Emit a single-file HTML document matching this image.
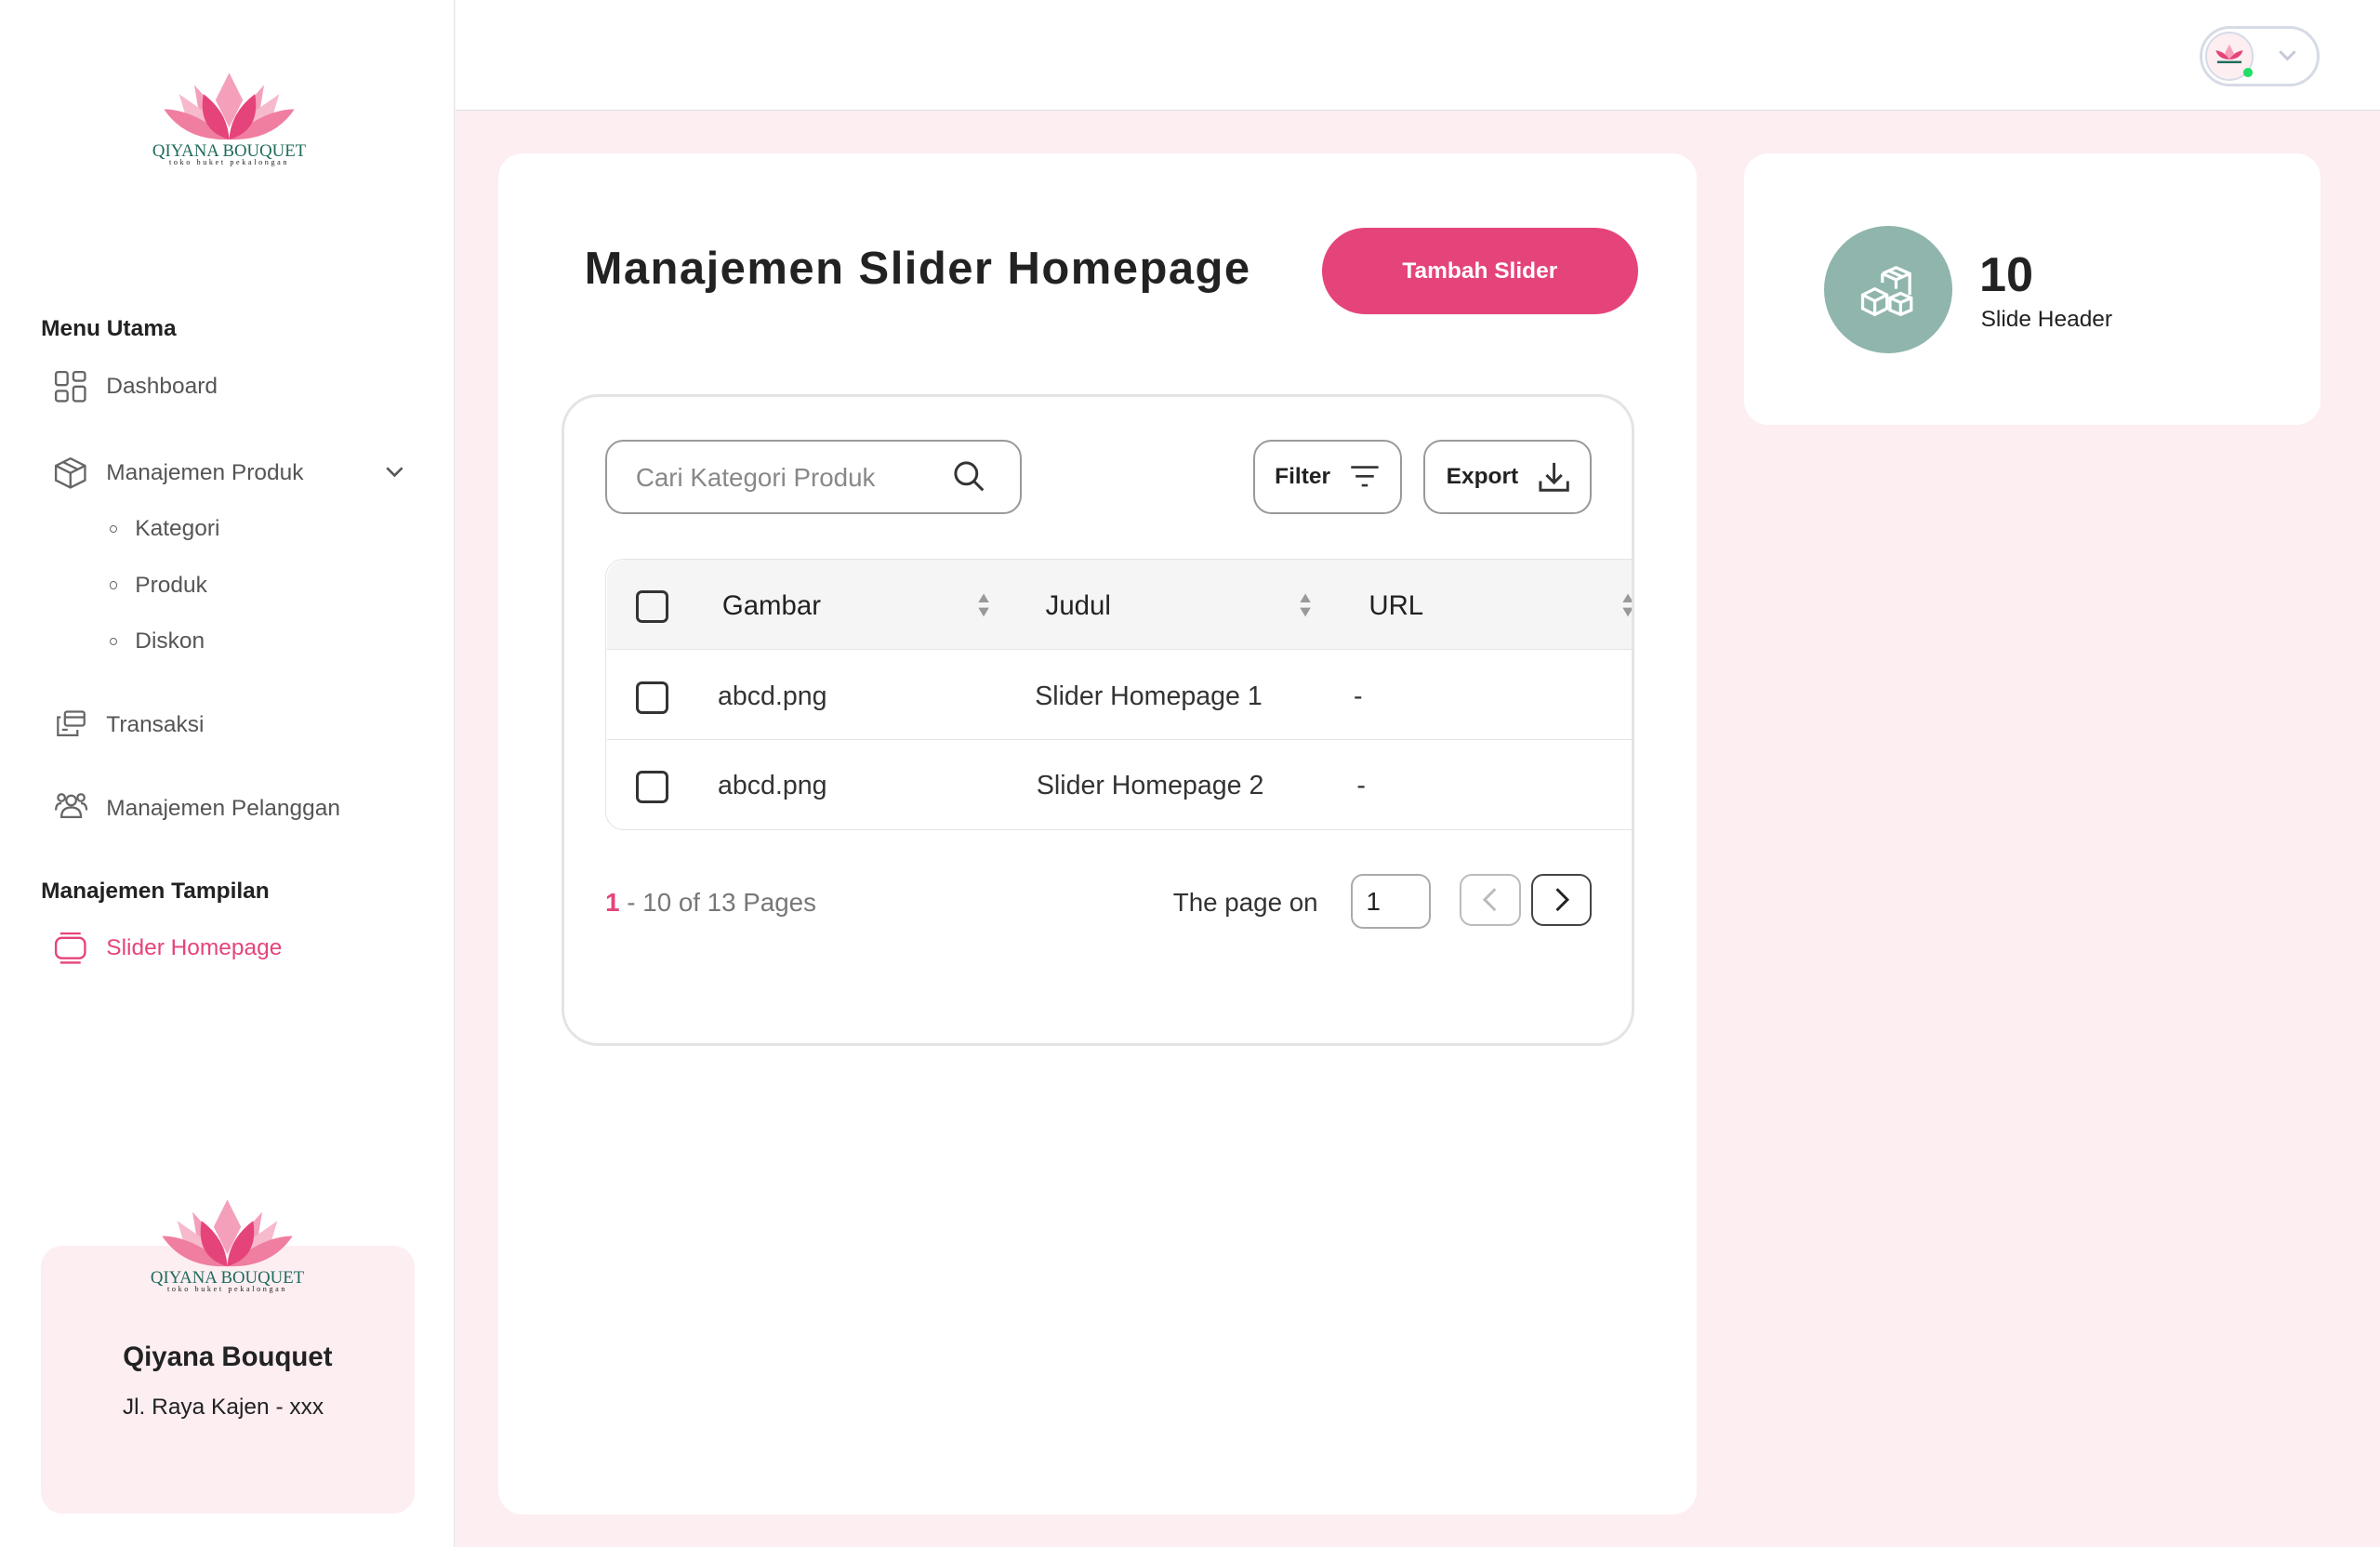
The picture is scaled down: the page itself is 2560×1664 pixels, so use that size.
<!DOCTYPE html>
<html><head><meta charset="utf-8"><style>
html,body{margin:0;padding:0}
body{width:1568px;height:1019px;zoom:1.63265;font-family:"Liberation Sans",sans-serif;color:#222;position:relative;overflow:hidden;background:#fdeef2}
.abs{position:absolute}
.side{left:0;top:0;width:299px;height:1019px;background:#fff;border-right:1px solid #e6e6e6}
.top{left:300px;top:0;width:1268px;height:72px;background:#fff;border-bottom:1px solid #dcdfe6}
.mi{position:absolute;left:70px;font-size:15px;color:#555}
.sub{position:absolute;left:89px;font-size:15px;color:#555}
.dot{position:absolute;left:72px;width:4px;height:4px;border:1px solid #666;border-radius:50%}
.hd{position:absolute;left:27px;font-size:15px;font-weight:bold;color:#222}
.ic{position:absolute;left:35px}
.srt{position:absolute;font-size:10px;color:#999;line-height:9px;transform:scaleX(1.2)}
.td{position:absolute;font-size:17.5px;color:#333}
</style></head><body>
<div class="abs side">
 <svg class="abs" style="left:98px;top:46px" width="106" height="64" viewBox="0 0 106 64">
  <path d="M53 2 L62 20 L53 38 L44 20Z" fill="#f4a0bb"/>
  <path d="M30 10 L46 28 L53 44 L34 34Z" fill="#f4a0bb"/><path d="M76 10 L60 28 L53 44 L72 34Z" fill="#f4a0bb"/>
  <path d="M20 16 L40 30 L53 46 L26 36Z" fill="#f7b9cc"/><path d="M86 16 L66 30 L53 46 L80 36Z" fill="#f7b9cc"/>
  <path d="M10 26 Q30 26 53 46 Q24 47 10 26Z" fill="#ef7ea0"/><path d="M96 26 Q76 26 53 46 Q82 47 96 26Z" fill="#ef7ea0"/>
  <path d="M36 16 Q52 28 53 46 Q32 40 36 16Z" fill="#e5447a"/><path d="M70 16 Q54 28 53 46 Q74 40 70 16Z" fill="#e5447a"/>
  <text x="53" y="57" text-anchor="middle" font-family="Liberation Serif" font-size="11.5" fill="#1e6b5c">QIYANA BOUQUET</text>
  <text x="53" y="62.5" text-anchor="middle" font-family="Liberation Serif" font-size="5" letter-spacing="1.6" fill="#222">toko buket pekalongan</text>
 </svg>
 <div class="hd" style="top:208px">Menu Utama</div>
 <svg class="ic" style="top:243px" width="23" height="23" viewBox="0 0 24 24" fill="none" stroke="#666" stroke-width="1.5"><rect x="2" y="2" width="8" height="9" rx="1.5"/><rect x="14" y="2" width="8" height="6" rx="1.5"/><rect x="2" y="15" width="8" height="7" rx="1.5"/><rect x="14" y="12" width="8" height="10" rx="1.5"/></svg>
 <div class="mi" style="top:246px">Dashboard</div>
 <svg class="ic" style="top:300px" width="23" height="23" viewBox="0 0 24 24" fill="none" stroke="#666" stroke-width="1.5"><path d="M12 2 L22 7 L22 17 L12 22 L2 17 L2 7Z M2 7 L12 12 L22 7 M12 12 V22 M7 4.5 L17 9.5"/></svg>
 <div class="mi" style="top:303px">Manajemen Produk</div>
 <svg class="abs" style="left:253px;top:306px" width="14" height="10" viewBox="0 0 14 10" fill="none" stroke="#555" stroke-width="1.6"><path d="M2 2 L7 7 L12 2"/></svg>
 <div class="dot" style="top:346px"></div><div class="sub" style="top:340px">Kategori</div>
 <div class="dot" style="top:383px"></div><div class="sub" style="top:377px">Produk</div>
 <div class="dot" style="top:420px"></div><div class="sub" style="top:414px">Diskon</div>
 <svg class="ic" style="top:466px" width="23" height="22" viewBox="0 0 24 24" fill="none" stroke="#666" stroke-width="1.5"><rect x="8" y="3" width="14" height="10" rx="1.5"/><path d="M8 7 H22"/><path d="M5 7 H3 V20 H17 V16"/><path d="M6 16 H10"/></svg>
 <div class="mi" style="top:469px">Transaksi</div>
 <svg class="ic" style="top:520px" width="24" height="22" viewBox="0 0 24 24" fill="none" stroke="#666" stroke-width="1.5"><circle cx="12" cy="8" r="3.5"/><path d="M5 20 Q5 13 12 13 Q19 13 19 20Z"/><circle cx="5" cy="6" r="2.5"/><circle cx="19" cy="6" r="2.5"/><path d="M1 15 Q1 10 5 10 M23 15 Q23 10 19 10"/></svg>
 <div class="mi" style="top:524px">Manajemen Pelanggan</div>
 <div class="hd" style="top:579px">Manajemen Tampilan</div>
 <svg class="ic" style="top:613px" width="23" height="23" viewBox="0 0 24 24" fill="none" stroke="#e5447a" stroke-width="1.5"><rect x="2" y="5" width="20" height="14" rx="4"/><path d="M5 2 H19 M5 22 H19"/></svg>
 <div class="mi" style="top:616px;color:#e5447a">Slider Homepage</div>
 <div class="abs" style="left:27px;top:821px;width:246px;height:176px;background:#fdeef2;border-radius:14px"></div>
 <svg class="abs" style="left:97px;top:788px" width="106" height="64" viewBox="0 0 106 64">
  <path d="M53 2 L62 20 L53 38 L44 20Z" fill="#f4a0bb"/>
  <path d="M30 10 L46 28 L53 44 L34 34Z" fill="#f4a0bb"/><path d="M76 10 L60 28 L53 44 L72 34Z" fill="#f4a0bb"/>
  <path d="M20 16 L40 30 L53 46 L26 36Z" fill="#f7b9cc"/><path d="M86 16 L66 30 L53 46 L80 36Z" fill="#f7b9cc"/>
  <path d="M10 26 Q30 26 53 46 Q24 47 10 26Z" fill="#ef7ea0"/><path d="M96 26 Q76 26 53 46 Q82 47 96 26Z" fill="#ef7ea0"/>
  <path d="M36 16 Q52 28 53 46 Q32 40 36 16Z" fill="#e5447a"/><path d="M70 16 Q54 28 53 46 Q74 40 70 16Z" fill="#e5447a"/>
  <text x="53" y="57" text-anchor="middle" font-family="Liberation Serif" font-size="11.5" fill="#1e6b5c">QIYANA BOUQUET</text>
  <text x="53" y="62.5" text-anchor="middle" font-family="Liberation Serif" font-size="5" letter-spacing="1.6" fill="#222">toko buket pekalongan</text>
 </svg>
 <div class="abs" style="left:27px;width:246px;top:884px;text-align:center;font-size:18px;font-weight:bold">Qiyana Bouquet</div>
 <div class="abs" style="left:27px;width:240px;top:919px;text-align:center;font-size:15px">Jl. Raya Kajen - xxx</div>
</div>
<div class="abs top">
 <div class="abs" style="left:1149px;top:17px;width:79px;height:40px;border:2px solid #d6dbe6;border-radius:22px;box-sizing:border-box"></div>
 <div class="abs" style="left:1153px;top:21px;width:32px;height:32px;border-radius:50%;background:#fdeef2;border:1.5px solid #d6dbe6;box-sizing:border-box"></div>
 <svg class="abs" style="left:1158px;top:28px" width="22" height="14" viewBox="0 0 22 14"><path d="M11 1 L14 7 L11 11 L8 7Z" fill="#f4a0bb"/><path d="M2 5 Q8 6 11 11 Q4 11 2 5Z M20 5 Q14 6 11 11 Q18 11 20 5Z" fill="#e5447a"/><rect x="3" y="12" width="16" height="1.5" fill="#1e6b5c"/></svg>
 <div class="abs" style="left:1178px;top:45px;width:6px;height:6px;border-radius:50%;background:#22dd66"></div>
 <svg class="abs" style="left:1200px;top:32px" width="14" height="9" viewBox="0 0 14 9" fill="none" stroke="#c4cad6" stroke-width="1.8"><path d="M2 2 L7 7 L12 2"/></svg>
</div>
<div class="abs" style="left:328px;top:101px;width:790px;height:897px;background:#fff;border-radius:16px"></div>
<div class="abs" style="left:385px;top:160px;font-size:30px;font-weight:bold;color:#222;letter-spacing:0.9px">Manajemen Slider Homepage</div>
<div class="abs" style="left:871px;top:150px;width:208px;height:57px;background:#e5447a;border-radius:29px;color:#fff;font-size:15px;font-weight:bold;text-align:center;line-height:57px">Tambah Slider</div>
<div class="abs" style="left:370px;top:260px;width:707px;height:429px;border:2px solid #e4e4e4;border-radius:24px;box-sizing:border-box;overflow:hidden">
 <div class="abs" style="left:27px;top:28px;width:274px;height:49px;border:1.5px solid #999;border-radius:12px;box-sizing:border-box"></div>
 <div class="abs" style="left:47px;top:43px;font-size:17px;color:#888">Cari Kategori Produk</div>
 <svg class="abs" style="left:255px;top:40px" width="24" height="24" viewBox="0 0 24 24" fill="none" stroke="#333" stroke-width="1.8"><circle cx="10" cy="10" r="7"/><path d="M15 15 L21 21"/></svg>
 <div class="abs" style="left:454px;top:28px;width:98px;height:49px;border:1.5px solid #999;border-radius:12px;box-sizing:border-box"></div>
 <div class="abs" style="left:468px;top:44px;font-size:15px;font-weight:bold">Filter</div>
 <svg class="abs" style="left:516px;top:42px" width="22" height="20" viewBox="0 0 22 20" fill="none" stroke="#333" stroke-width="1.6"><path d="M2 4 H20 M5 10 H17 M9 16 H13"/></svg>
 <div class="abs" style="left:566px;top:28px;width:111px;height:49px;border:1.5px solid #999;border-radius:12px;box-sizing:border-box"></div>
 <div class="abs" style="left:581px;top:44px;font-size:15px;font-weight:bold">Export</div>
 <svg class="abs" style="left:640px;top:40px" width="24" height="24" viewBox="0 0 24 24" fill="none" stroke="#333" stroke-width="1.8"><path d="M12 3 V16 M7 11 L12 16 L17 11 M3 15 V21 H21 V15"/></svg>
 <div class="abs" style="left:27px;top:106px;width:690px;height:179px;border:1px solid #e4e4e4;border-radius:12px 0 0 12px;box-sizing:border-box"></div>
 <div class="abs" style="left:28px;top:107px;width:680px;height:59px;background:#f5f5f5;border-bottom:1px solid #e4e4e4;border-radius:12px 0 0 0"></div>
 <div class="abs" style="left:47px;top:127px;width:18px;height:18px;border:2px solid #333;border-radius:4px"></div>
 <div class="abs" style="left:104px;top:127px;font-size:18px">Gambar</div>
 <div class="abs" style="left:317px;top:127px;font-size:18px">Judul</div>
 <div class="abs" style="left:530px;top:127px;font-size:18px">URL</div>
 <div class="srt" style="left:271px;top:128px">▲<br>▼</div>
 <div class="srt" style="left:483px;top:128px">▲<br>▼</div>
 <div class="srt" style="left:696px;top:128px">▲<br>▼</div>
 <div class="abs" style="left:47px;top:187px;width:18px;height:18px;border:2px solid #333;border-radius:4px"></div>
 <div class="td" style="left:101px;top:187px">abcd.png</div>
 <div class="td" style="left:310px;top:187px">Slider Homepage 1</div>
 <div class="td" style="left:520px;top:187px">-</div>
 <div class="abs" style="left:28px;top:225px;width:680px;height:1px;background:#e4e4e4"></div>
 <div class="abs" style="left:47px;top:246px;width:18px;height:18px;border:2px solid #333;border-radius:4px"></div>
 <div class="td" style="left:101px;top:246px">abcd.png</div>
 <div class="td" style="left:311px;top:246px">Slider Homepage 2</div>
 <div class="td" style="left:522px;top:246px">-</div>
 <div class="abs" style="left:27px;top:323px;font-size:17px;color:#777"><span style="color:#e5447a;font-weight:bold">1</span> - 10 of 13 Pages</div>
 <div class="abs" style="left:401px;top:323px;font-size:17px;color:#333">The page on</div>
 <div class="abs" style="left:518px;top:314px;width:53px;height:36px;border:1.5px solid #aaa;border-radius:8px;box-sizing:border-box;padding:7px 9px;font-size:17px">1</div>
 <div class="abs" style="left:590px;top:314px;width:40px;height:34px;border:1.5px solid #bbb;border-radius:8px;box-sizing:border-box"></div>
 <svg class="abs" style="left:603px;top:322px" width="14" height="18" viewBox="0 0 14 18" fill="none" stroke="#bbb" stroke-width="1.8"><path d="M10 2 L3 9 L10 16"/></svg>
 <div class="abs" style="left:637px;top:314px;width:40px;height:34px;border:1.5px solid #444;border-radius:8px;box-sizing:border-box"></div>
 <svg class="abs" style="left:650px;top:322px" width="14" height="18" viewBox="0 0 14 18" fill="none" stroke="#222" stroke-width="1.8"><path d="M4 2 L11 9 L4 16"/></svg>
</div>
<div class="abs" style="left:1149px;top:101px;width:380px;height:179px;background:#fff;border-radius:16px"></div>
<div class="abs" style="left:1202px;top:149px;width:84px;height:84px;border-radius:50%;background:#8fb5ad"></div>
<svg class="abs" style="left:1223px;top:170px" width="42" height="42" viewBox="0 0 42 42" fill="none" stroke="#fff" stroke-width="2"><path d="M17 10 L26 6 L35 10 L35 24 M17 10 L17 16 M17 10 L26 14 L35 10 M26 14 V20 M21 8 L30 12"/><path d="M4 24 L12 20 L20 24 V33 L12 37 L4 33Z M4 24 L12 28 L20 24 M12 28 V37"/><path d="M22 26 L29 23 L36 26 V34 L29 37 L22 34Z M22 26 L29 29 L36 26 M29 29 V37"/></svg>
<div class="abs" style="left:1304px;top:163px;font-size:32px;font-weight:bold;color:#222">10</div>
<div class="abs" style="left:1305px;top:202px;font-size:15px;color:#222">Slide Header</div>
</body></html>
